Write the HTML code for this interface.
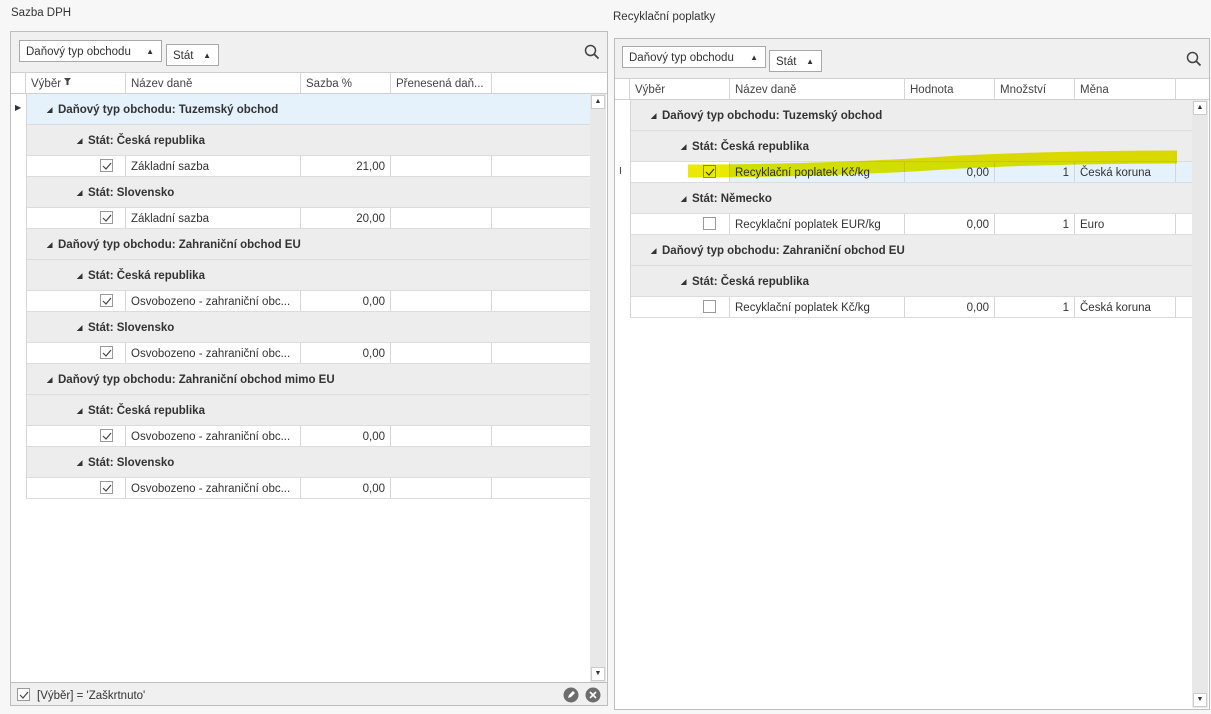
<!DOCTYPE html>
<html><head><meta charset="utf-8"><style>
*{box-sizing:border-box;margin:0;padding:0}
body{width:1211px;height:714px;background:#f7f7f7;font-family:"Liberation Sans",sans-serif;font-size:11.5px;color:#333;position:relative;overflow:hidden}
.a{position:absolute}
.box{position:absolute;border:1px solid #bdbdbd;background:#fff}
.tb{position:absolute;background:#f0f0f0;border-bottom:1px solid #cfcfcf}
.btn{position:absolute;border:1px solid #a8a8a8;background:#fff;height:22px;padding:5px 6px;white-space:nowrap}
.btn i{font-style:normal;font-size:8px;position:absolute;right:7px;top:6px}
.hdr{position:absolute;background:#fff;border-bottom:1px solid #cfcfcf;height:21px}
.hc{position:absolute;top:0;height:20px;border-right:1px solid #d6d6d6;padding:5px 5px 0;color:#444;white-space:nowrap;overflow:hidden}
.row{position:absolute;overflow:hidden}
.g{background:#ededed;border-bottom:1px solid #dcdcdc;font-weight:bold;color:#333}
.g.b{background:#e5f1fb}
.g span{position:absolute;top:10px}
.g em{position:absolute;top:12px;font-style:normal;font-size:7px}
.d{background:#fff;border-bottom:1px solid #dcdcdc}
.c{position:absolute;top:0;height:20px;border-right:1px solid #d6d6d6;padding:5px 5px 0;white-space:nowrap;overflow:hidden}
.r{text-align:right}
.cb{position:absolute;width:13px;height:13px;border:1px solid #9a9a9a;background:#fff;top:3px;padding:0}
.cb svg{position:absolute;left:1px;top:1px}
.sb{position:absolute;background:#e8e8e8}
.sbb{position:absolute;width:14px;height:14px;background:#fff;border:1px solid #ccc;font-size:7px;text-align:center;line-height:12px;color:#333}
</style></head><body>
<div class="a" style="left:11px;top:7px;color:#333">Sazba DPH</div>
<div class="a" style="left:613px;top:11px;color:#333">Recyklační poplatky</div>

<!-- LEFT -->
<div class="box" style="left:10px;top:31px;width:598px;height:675px"></div>
<div class="tb" style="left:11px;top:32px;width:596px;height:41px"></div>
<div class="btn" style="left:19px;top:40px;width:143px">Daňový typ obchodu<i>▲</i></div>
<div class="btn" style="left:166px;top:44px;width:53px">Stát<i>▲</i></div>
<svg class="a" style="left:584px;top:44px" width="16" height="16"><circle cx="6.5" cy="6.5" r="5" fill="none" stroke="#444" stroke-width="1.5"/><path d="M10 10l4.5 4.5" stroke="#444" stroke-width="1.8"/></svg>
<div class="hdr" style="left:11px;top:73px;width:596px"></div>
<div class="hc" style="left:11px;top:73px;width:15px"></div>
<div class="hc" style="left:26px;top:73px;width:100px">Výběr <svg width="7" height="8" style="vertical-align:top"><path d="M0 0h7L4.5 3v4h-2V3z" fill="#444"/></svg></div>
<div class="hc" style="left:126px;top:73px;width:175px">Název daně</div>
<div class="hc" style="left:301px;top:73px;width:90px">Sazba %</div>
<div class="hc" style="left:391px;top:73px;width:101px">Přenesená daň...</div>
<div class="a" style="left:15px;top:103px;font-size:8px">▶</div>
<div class="sb" style="left:590px;top:94px;width:16px;height:588px"></div>
<div class="sbb" style="left:591px;top:95px">▲</div>
<div class="sbb" style="left:591px;top:667px">▼</div>

<div class="row g b" style="left:26px;top:94px;width:564px;height:31px"><em style="left:21px">◢</em><span style="left:32px">Daňový typ obchodu: Tuzemský obchod</span></div>
<div class="row g" style="left:26px;top:125px;width:564px;height:31px"><em style="left:51px">◢</em><span style="left:62px">Stát: Česká republika</span></div>
<div class="row d" style="left:26px;top:156px;width:564px;height:21px"><div class="c" style="left:0;width:100px"><div class="cb" style="left:74px"><svg width="10" height="10"><path d="M1 5l3 3 5-6" fill="none" stroke="#444" stroke-width="1.2"/></svg></div></div><div class="c" style="left:100px;width:175px">Základní sazba</div><div class="c r" style="left:275px;width:90px">21,00</div><div class="c" style="left:365px;width:101px"></div></div>
<div class="row g" style="left:26px;top:177px;width:564px;height:31px"><em style="left:51px">◢</em><span style="left:62px">Stát: Slovensko</span></div>
<div class="row d" style="left:26px;top:208px;width:564px;height:21px"><div class="c" style="left:0;width:100px"><div class="cb" style="left:74px"><svg width="10" height="10"><path d="M1 5l3 3 5-6" fill="none" stroke="#444" stroke-width="1.2"/></svg></div></div><div class="c" style="left:100px;width:175px">Základní sazba</div><div class="c r" style="left:275px;width:90px">20,00</div><div class="c" style="left:365px;width:101px"></div></div>
<div class="row g" style="left:26px;top:229px;width:564px;height:31px"><em style="left:21px">◢</em><span style="left:32px">Daňový typ obchodu: Zahraniční obchod EU</span></div>
<div class="row g" style="left:26px;top:260px;width:564px;height:31px"><em style="left:51px">◢</em><span style="left:62px">Stát: Česká republika</span></div>
<div class="row d" style="left:26px;top:291px;width:564px;height:21px"><div class="c" style="left:0;width:100px"><div class="cb" style="left:74px"><svg width="10" height="10"><path d="M1 5l3 3 5-6" fill="none" stroke="#444" stroke-width="1.2"/></svg></div></div><div class="c" style="left:100px;width:175px">Osvobozeno - zahraniční obc...</div><div class="c r" style="left:275px;width:90px">0,00</div><div class="c" style="left:365px;width:101px"></div></div>
<div class="row g" style="left:26px;top:312px;width:564px;height:31px"><em style="left:51px">◢</em><span style="left:62px">Stát: Slovensko</span></div>
<div class="row d" style="left:26px;top:343px;width:564px;height:21px"><div class="c" style="left:0;width:100px"><div class="cb" style="left:74px"><svg width="10" height="10"><path d="M1 5l3 3 5-6" fill="none" stroke="#444" stroke-width="1.2"/></svg></div></div><div class="c" style="left:100px;width:175px">Osvobozeno - zahraniční obc...</div><div class="c r" style="left:275px;width:90px">0,00</div><div class="c" style="left:365px;width:101px"></div></div>
<div class="row g" style="left:26px;top:364px;width:564px;height:31px"><em style="left:21px">◢</em><span style="left:32px">Daňový typ obchodu: Zahraniční obchod mimo EU</span></div>
<div class="row g" style="left:26px;top:395px;width:564px;height:31px"><em style="left:51px">◢</em><span style="left:62px">Stát: Česká republika</span></div>
<div class="row d" style="left:26px;top:426px;width:564px;height:21px"><div class="c" style="left:0;width:100px"><div class="cb" style="left:74px"><svg width="10" height="10"><path d="M1 5l3 3 5-6" fill="none" stroke="#444" stroke-width="1.2"/></svg></div></div><div class="c" style="left:100px;width:175px">Osvobozeno - zahraniční obc...</div><div class="c r" style="left:275px;width:90px">0,00</div><div class="c" style="left:365px;width:101px"></div></div>
<div class="row g" style="left:26px;top:447px;width:564px;height:31px"><em style="left:51px">◢</em><span style="left:62px">Stát: Slovensko</span></div>
<div class="row d" style="left:26px;top:478px;width:564px;height:21px"><div class="c" style="left:0;width:100px"><div class="cb" style="left:74px"><svg width="10" height="10"><path d="M1 5l3 3 5-6" fill="none" stroke="#444" stroke-width="1.2"/></svg></div></div><div class="c" style="left:100px;width:175px">Osvobozeno - zahraniční obc...</div><div class="c r" style="left:275px;width:90px">0,00</div><div class="c" style="left:365px;width:101px"></div></div>
<div class="a" style="left:26px;top:94px;width:1px;height:405px;background:#d6d6d6"></div>

<div class="a" style="left:11px;top:682px;width:596px;height:23px;background:#f0f0f0;border-top:1px solid #bdbdbd"></div>
<div class="cb" style="left:17px;top:688px"><svg width="10" height="10"><path d="M1 5l3 3 5-6" fill="none" stroke="#444" stroke-width="1.2"/></svg></div>
<div class="a" style="left:37px;top:690px;color:#333">[Výběr] = 'Zaškrtnuto'</div>
<svg class="a" style="left:563px;top:687px" width="40" height="16"><circle cx="8" cy="8" r="7.5" fill="#6d6d6d"/><path d="M5 11l1-3 4-4 2 2-4 4z" fill="#fff"/><circle cx="30" cy="8" r="7.5" fill="#6d6d6d"/><path d="M27 5l6 6M33 5l-6 6" stroke="#fff" stroke-width="1.6"/></svg>

<!-- RIGHT -->
<div class="box" style="left:614px;top:38px;width:596px;height:672px"></div>
<div class="tb" style="left:615px;top:39px;width:594px;height:40px"></div>
<div class="btn" style="left:622px;top:46px;width:144px">Daňový typ obchodu<i>▲</i></div>
<div class="btn" style="left:769px;top:50px;width:53px">Stát<i>▲</i></div>
<svg class="a" style="left:1186px;top:51px" width="16" height="16"><circle cx="6.5" cy="6.5" r="5" fill="none" stroke="#444" stroke-width="1.5"/><path d="M10 10l4.5 4.5" stroke="#444" stroke-width="1.8"/></svg>
<div class="hdr" style="left:615px;top:79px;width:594px"></div>
<div class="hc" style="left:615px;top:79px;width:15px"></div>
<div class="hc" style="left:630px;top:79px;width:100px">Výběr</div>
<div class="hc" style="left:730px;top:79px;width:175px">Název daně</div>
<div class="hc" style="left:905px;top:79px;width:90px">Hodnota</div>
<div class="hc" style="left:995px;top:79px;width:80px">Množství</div>
<div class="hc" style="left:1075px;top:79px;width:101px">Měna</div>
<div class="sb" style="left:1192px;top:100px;width:16px;height:608px"></div>
<div class="sbb" style="left:1193px;top:101px">▲</div>
<div class="sbb" style="left:1193px;top:693px">▼</div>
<div class="a" style="left:619px;top:166px;font-size:10px">I</div>

<div class="row g" style="left:630px;top:100px;width:562px;height:31px"><em style="left:21px">◢</em><span style="left:32px">Daňový typ obchodu: Tuzemský obchod</span></div>
<div class="row g" style="left:630px;top:131px;width:562px;height:31px"><em style="left:51px">◢</em><span style="left:62px">Stát: Česká republika</span></div>
<div class="row d" style="left:630px;top:162px;width:562px;height:21px"><div class="c" style="left:0;width:100px"><div class="cb" style="left:73px"><svg width="10" height="10"><path d="M1 5l3 3 5-6" fill="none" stroke="#444" stroke-width="1.2"/></svg></div></div><div class="c" style="left:100px;width:175px;background:#e5f1fb">Recyklační poplatek Kč/kg</div><div class="c r" style="left:275px;width:90px;background:#e5f1fb">0,00</div><div class="c r" style="left:365px;width:80px;background:#e5f1fb">1</div><div class="c" style="left:445px;width:101px;background:#e5f1fb">Česká koruna</div><div class="c" style="left:546px;width:16px;background:#e5f1fb;border:none"></div></div>
<div class="row g" style="left:630px;top:183px;width:562px;height:31px"><em style="left:51px">◢</em><span style="left:62px">Stát: Německo</span></div>
<div class="row d" style="left:630px;top:214px;width:562px;height:21px"><div class="c" style="left:0;width:100px"><div class="cb" style="left:73px"></div></div><div class="c" style="left:100px;width:175px">Recyklační poplatek EUR/kg</div><div class="c r" style="left:275px;width:90px">0,00</div><div class="c r" style="left:365px;width:80px">1</div><div class="c" style="left:445px;width:101px">Euro</div></div>
<div class="row g" style="left:630px;top:235px;width:562px;height:31px"><em style="left:21px">◢</em><span style="left:32px">Daňový typ obchodu: Zahraniční obchod EU</span></div>
<div class="row g" style="left:630px;top:266px;width:562px;height:31px"><em style="left:51px">◢</em><span style="left:62px">Stát: Česká republika</span></div>
<div class="row d" style="left:630px;top:297px;width:562px;height:21px"><div class="c" style="left:0;width:100px"><div class="cb" style="left:73px"></div></div><div class="c" style="left:100px;width:175px">Recyklační poplatek Kč/kg</div><div class="c r" style="left:275px;width:90px">0,00</div><div class="c r" style="left:365px;width:80px">1</div><div class="c" style="left:445px;width:101px">Česká koruna</div></div>
<div class="a" style="left:630px;top:100px;width:1px;height:218px;background:#d6d6d6"></div>

<svg class="a" style="left:0;top:0;mix-blend-mode:multiply" width="1211" height="714"><path d="M688 171 C760 171 860 169 960 162 C1040 158 1120 157 1177 157" fill="none" stroke="#eaea00" stroke-width="13" stroke-linecap="butt"/></svg>
</body></html>
